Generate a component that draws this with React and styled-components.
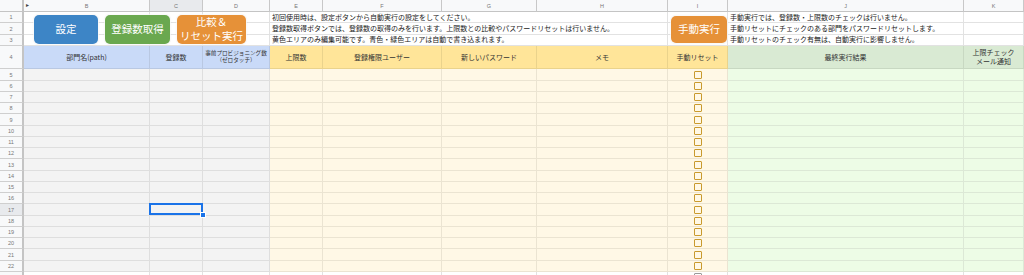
import { Fragment } from 'react';
import styled, { createGlobalStyle, css } from 'styled-components';

const GlobalStyle = createGlobalStyle`
  html, body {
    margin: 0;
    padding: 0;
    background: #fff;
  }
  body {
    width: 1024px;
    height: 275px;
    overflow: hidden;
    font-family: "Noto Sans CJK JP", "Liberation Sans", sans-serif;
  }
`;

const WIDTHS = [24, 126, 53, 67, 53, 119, 95, 131, 60, 236, 60];
const LETTERS = ['B', 'C', 'D', 'E', 'F', 'G', 'H', 'I', 'J', 'K'];

const TONES = {
  white: { bg: '#ffffff', line: '#e2e2e2' },
  gray: { bg: '#f3f3f3', line: '#dedede' },
  yellow: { bg: '#fff8e6', line: '#ebe4d2' },
  green: { bg: '#edfce6', line: '#dce8d6' },
  headBlue: { bg: '#c9daf8', line: '#b9c8e2' },
  headYellow: { bg: '#ffe599', line: '#ead38c' },
  headGreen: { bg: '#d9ead3', line: '#c8d8c2' },
};

const Sheet = styled.div`
  display: grid;
  grid-template-columns: ${WIDTHS.map((w) => `${w}px`).join(' ')};
  grid-template-rows: 12px repeat(3, 11.35px) 23.4px repeat(19, 11.25px);
`;

const Placed = styled.div`
  grid-row: ${(p) => p.$row};
  grid-column: ${(p) => p.$col};
  box-sizing: border-box;
  min-width: 0;
`;

const ColHead = styled(Placed)`
  background: ${(p) => (p.$active ? '#e8eaed' : '#f8f9fa')};
  border-right: 1px solid #c8c8c8;
  border-bottom: 1px solid #c4c4c4;
  font-family: "Liberation Sans", Arial, sans-serif;
  font-size: 5.5px;
  color: #777;
  display: flex;
  align-items: center;
  justify-content: center;
  position: relative;
`;

const Corner = styled(Placed)`
  background: #f8f9fa;
  border-right: 2px solid #c4c4c4;
  border-bottom: 1px solid #c4c4c4;
`;

const Frozen = styled.span`
  position: absolute;
  left: 2px;
  top: 2px;
  font-size: 6px;
  color: #444;
  line-height: 1;
`;

const RowHead = styled(Placed)`
  background: ${(p) => (p.$active ? '#e8eaed' : '#f8f9fa')};
  border-right: 2px solid #c4c4c4;
  border-bottom: 1px solid #cfcfcf;
  font-family: "Liberation Sans", Arial, sans-serif;
  font-size: 5.5px;
  color: #777;
  display: flex;
  align-items: center;
  justify-content: center;
`;

const Cell = styled(Placed)`
  background: ${(p) => TONES[p.$tone].bg};
  border-right: 1px solid ${(p) => TONES[p.$tone].line};
  border-bottom: 1px solid ${(p) => TONES[p.$tone].line};
  display: flex;
  align-items: center;
  justify-content: center;
  text-align: center;
  font-size: 7px;
  line-height: 1.2;
  color: #333;
  ${(p) =>
    p.$selected &&
    css`
      position: relative;
      &::after {
        content: '';
        position: absolute;
        left: -1px;
        top: -1px;
        right: -1px;
        bottom: 0;
        border: 2px solid #1a73e8;
      }
      &::before {
        content: '';
        position: absolute;
        right: -4px;
        bottom: -3px;
        width: 4px;
        height: 4px;
        background: #1a73e8;
        border: 1px solid #fff;
        z-index: 2;
      }
    `}
`;

const Note = styled(Placed)`
  background: #fff;
  border-bottom: 1px solid #e2e2e2;
  border-right: 1px solid #e2e2e2;
  font-size: 7px;
  line-height: 1;
  color: #222;
  padding-left: 2px;
  display: flex;
  align-items: center;
  white-space: nowrap;
  overflow: hidden;
`;

const SmallHead = styled.span`
  font-size: ${(p) => p.$size || 7}px;
  line-height: 1.25;
  white-space: pre-line;
`;

const Check = styled.span`
  width: 8px;
  height: 8px;
  box-sizing: border-box;
  border: 1.5px solid ${(p) => (p.$muted ? '#9a9a9a' : '#c99a2e')};
  border-radius: 1px;
`;

const ButtonBar = styled(Placed)`
  display: flex;
  align-items: center;
  gap: 7px;
  padding-left: 10px;
`;

const ManualSlot = styled(Placed)`
  display: flex;
  align-items: center;
  padding-left: 3px;
`;

const Button = styled.div`
  width: ${(p) => p.$w}px;
  height: ${(p) => p.$h || 29}px;
  border-radius: 5px;
  background: ${(p) => p.$bg};
  color: #fff;
  font-size: 10.5px;
  line-height: 1.3;
  display: flex;
  align-items: center;
  justify-content: center;
  text-align: center;
  white-space: pre-line;
  box-shadow: 0 0 0 1px rgba(255, 255, 255, 0.7), 0 0 1px 1px rgba(0, 0, 0, 0.08);
`;

const NOTES_LEFT = [
  '初回使用時は、設定ボタンから自動実行の設定をしてください。',
  '登録数取得ボタンでは、登録数の取得のみを行います。上限数との比較やパスワードリセットは行いません。',
  '黄色エリアのみ編集可能です。青色・緑色エリアは自動で書き込まれます。',
];

const NOTES_RIGHT = [
  '手動実行では、登録数・上限数のチェックは行いません。',
  '手動リセットにチェックのある部門をパスワードリセットします。',
  '手動リセットのチェック有無は、自動実行に影響しません。',
];

const HEADERS = [
  { tone: 'headBlue', text: '部門名(path)' },
  { tone: 'headBlue', text: '登録数' },
  { tone: 'headBlue', text: '事前プロビジョニング数\n（ゼロタッチ）', size: 5.6 },
  { tone: 'headYellow', text: '上限数' },
  { tone: 'headYellow', text: '登録権限ユーザー' },
  { tone: 'headYellow', text: '新しいパスワード' },
  { tone: 'headYellow', text: 'メモ' },
  { tone: 'headYellow', text: '手動リセット' },
  { tone: 'headGreen', text: '最終実行結果' },
  { tone: 'headGreen', text: '上限チェック\nメール通知' },
];

const DATA_TONES = ['gray', 'gray', 'gray', 'yellow', 'yellow', 'yellow', 'yellow', 'yellow', 'green', 'green'];

const App = () => {
  const dataRows = [];
  for (let n = 5; n <= 23; n++) dataRows.push(n);

  return (
    <>
      <GlobalStyle />
      <Sheet>
        <Corner $row={1} $col={1} />
        {LETTERS.map((l, i) => (
          <ColHead key={l} $row={1} $col={i + 2} $active={l === 'C'}>
            {i === 0 && <Frozen>▸</Frozen>}
            {l}
          </ColHead>
        ))}

        {[1, 2, 3].map((n, i) => (
          <Fragment key={`top${n}`}>
            <RowHead $row={n + 1} $col={1}>{n}</RowHead>
            {[2, 3, 4].map((c) => (
              <Cell key={c} $row={n + 1} $col={c} $tone="white" />
            ))}
            <Note $row={n + 1} $col="5 / 9">{NOTES_LEFT[i]}</Note>
            <Cell $row={n + 1} $col={9} $tone="white" />
            <Note $row={n + 1} $col={10}>{NOTES_RIGHT[i]}</Note>
            <Cell $row={n + 1} $col={11} $tone="white" />
          </Fragment>
        ))}

        <RowHead $row={5} $col={1}>4</RowHead>
        {HEADERS.map((h, i) => (
          <Cell key={h.text} $row={5} $col={i + 2} $tone={h.tone}>
            <SmallHead $size={h.size}>{h.text}</SmallHead>
          </Cell>
        ))}

        {dataRows.map((n) => (
          <Fragment key={`row${n}`}>
            {/* row 23 only peeks in at the bottom edge, its number is out of view */}
            <RowHead $row={n + 1} $col={1} $active={n === 17}>{n < 23 ? n : ''}</RowHead>
            {DATA_TONES.map((tone, i) => (
              <Cell
                key={i}
                $row={n + 1}
                $col={i + 2}
                $tone={n === 23 ? 'white' : tone}
                $selected={n === 17 && i === 1}
              >
                {i === 7 && <Check $muted={n === 23} />}
              </Cell>
            ))}
          </Fragment>
        ))}

        <ButtonBar $row="2 / 5" $col="2 / 5">
          <Button $w={64} $bg="#3d85c6">設定</Button>
          <Button $w={65} $bg="#6aa84f">登録数取得</Button>
          <Button $w={69} $bg="#e69138">{'比較＆\nリセット実行'}</Button>
        </ButtonBar>
        <ManualSlot $row="2 / 5" $col={9}>
          <Button $w={56} $h={27} $bg="#e69138">手動実行</Button>
        </ManualSlot>
      </Sheet>
    </>
  );
};

export default App;
